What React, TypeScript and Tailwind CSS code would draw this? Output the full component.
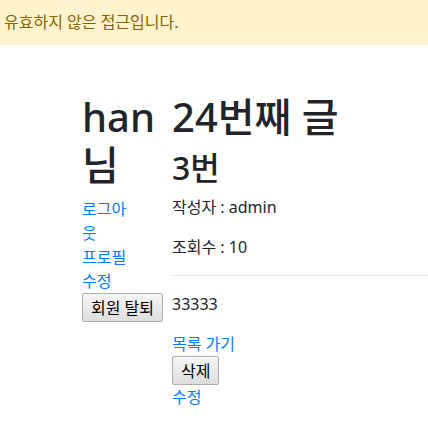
import React from "react";

const Btn = ({ children }: { children: React.ReactNode }) => (
  <button className="block whitespace-nowrap px-[8px] h-[29px] text-base leading-none text-black border border-[#adadad] rounded-[2px] bg-gradient-to-b from-[#f6f6f6] to-[#dddddd]">
    {children}
  </button>
);

const App = () => {
  return (
    <div className="min-h-[442px] bg-white text-[#212529] text-base leading-6 font-['Noto_Sans','Noto_Sans_CJK_KR',sans-serif]">
      <div className="h-[45px] flex items-center pl-1 bg-[#fff3cd] text-[#856404] border-b border-[#ffeeba]">
        유효하지 않은 접근입니다.
      </div>

      <div className="flex pl-[82px] pt-12">
        <div className="w-[52px] shrink-0">
          <h1 className="text-[40px] leading-[48px] font-medium mb-2 whitespace-nowrap">han<br />님</h1>
          <a className="block text-[#007bff]" href="#">로그아웃</a>
          <a className="block text-[#007bff]" href="#">프로필 수정</a>
          <Btn>회원 탈퇴</Btn>
        </div>

        <div className="flex-1 ml-[38px]">
          <h1 className="text-[40px] leading-[48px] font-medium mb-2">24번째 글</h1>
          <h2 className="text-[32px] leading-[38px] font-medium mb-2">3번</h2>
          <p className="mb-4">작성자 : admin</p>
          <p>조회수 : 10</p>
          <hr className="my-4 border-t border-black/10" />
          <p className="mb-4">33333</p>
          <a className="block text-[#007bff]" href="#">목록 가기</a>
          <Btn>삭제</Btn>
          <a className="block text-[#007bff]" href="#">수정</a>
        </div>
      </div>
    </div>
  );
};

export default App;
